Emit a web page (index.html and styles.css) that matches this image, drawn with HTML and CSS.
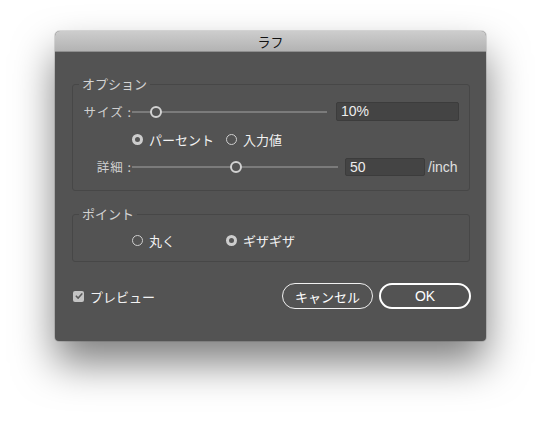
FILE: index.html
```html
<!DOCTYPE html>
<html lang="ja">
<head>
<meta charset="utf-8">
<title>ラフ</title>
<link rel="stylesheet" href="styles.css">
</head>
<body>
<div class="desktop">
  <div class="dialog">
    <div class="titlebar">ラフ</div>
    <div class="content">
      <fieldset class="group options">
        <legend>オプション</legend>
        <div class="row size-row">
          <span class="label">サイズ :</span>
          <div class="slider size-slider"><span class="thumb" style="left:18px"></span></div>
          <div class="field size-field">10%</div>
        </div>
        <div class="radio-row">
          <label class="radio-item"><span class="radio on"></span>パーセント</label>
          <label class="radio-item"><span class="radio"></span>入力値</label>
        </div>
        <div class="row detail-row">
          <span class="label">詳細 :</span>
          <div class="slider detail-slider"><span class="thumb" style="left:98px"></span></div>
          <div class="field detail-field">50</div>
          <span class="unit">/inch</span>
        </div>
      </fieldset>
      <fieldset class="group points">
        <legend>ポイント</legend>
        <div class="radio-row">
          <label class="radio-item"><span class="radio"></span>丸く</label>
          <label class="radio-item"><span class="radio on"></span>ギザギザ</label>
        </div>
      </fieldset>
      <div class="footer">
        <label class="check-item">
          <span class="checkbox"><svg viewBox="0 0 10 10" width="10" height="10"><path d="M2.3 5.2 L4.2 7.1 L7.8 2.9" fill="none" stroke="#5a5a5a" stroke-width="1.6" stroke-linecap="round" stroke-linejoin="round"/></svg></span>
          プレビュー
        </label>
        <div class="buttons">
          <button class="btn cancel">キャンセル</button>
          <button class="btn ok">OK</button>
        </div>
      </div>
    </div>
  </div>
</div>
</body>
</html>
```
FILE: styles.css
```css
html, body {
  margin: 0;
  padding: 0;
  background: #ffffff;
}
body {
  font-family: "Liberation Sans", "Noto Sans CJK JP", sans-serif;
  width: 542px;
  height: 421px;
  overflow: hidden;
}
.desktop {
  padding: 31px 0 0 55px;
}
.dialog {
  width: 431px;
  height: 310px;
  background: #535353;
  border-radius: 5px 5px 4px 4px;
  box-shadow: 0 22px 40px rgba(0,0,0,0.5), 0 0 0 1px rgba(0,0,0,0.12);
  overflow: hidden;
}
.titlebar {
  height: 21px;
  box-sizing: border-box;
  background: linear-gradient(#cdcdcd, #b3b3b3);
  border-bottom: 1px solid #8e8e8e;
  text-align: center;
  font-family: "Noto Sans CJK JP", sans-serif;
  font-size: 13px;
  line-height: 21px;
  color: #111;
}
.content {
  padding: 24px 16px 0 17px;
}
.group {
  margin: 0;
  border: 1px solid #474747;
  border-radius: 3px;
  min-width: 0;
}
.group legend {
  margin-left: 6px;
  padding: 0 3px;
  font-family: "Noto Sans CJK JP", sans-serif;
  font-size: 13px;
  line-height: 16px;
  color: #d4d4d4;
}
.options {
  padding: 10px 9px 14px 0;
}
.points {
  margin-top: 15px;
  padding: 9px 9px 14px 0;
}
.row {
  display: flex;
  align-items: center;
  height: 19px;
}
.label {
  width: 59px;
  flex: none;
  text-align: right;
  font-family: "Noto Sans CJK JP", sans-serif;
  font-size: 12.5px;
  letter-spacing: 1px;
  color: #d0d0d0;
  white-space: nowrap;
}
.slider {
  position: relative;
  height: 2px;
  background: #7b7b7b;
  flex: none;
}
.size-slider { width: 195px; margin-right: 9px; }
.detail-slider { width: 206px; margin-right: 7px; }
.thumb {
  position: absolute;
  top: -5px;
  width: 8px;
  height: 8px;
  border: 2px solid #d2d2d2;
  border-radius: 50%;
  background: #535353;
}
.field {
  box-sizing: border-box;
  height: 19px;
  background: #444444;
  border: 1px solid #3c3c3c;
  border-radius: 2px;
  color: #ededed;
  font-size: 14px;
  line-height: 17px;
  padding-left: 4px;
  flex: none;
}
.size-field { width: 123px; }
.detail-field { width: 80px; height: 18px; line-height: 16px; }
.unit {
  margin-left: 3px;
  font-size: 14px;
  color: #e0e0e0;
}
.detail-row { margin-top: 11px; }
.radio-row {
  display: grid;
  grid-template-columns: 94px auto;
  padding-left: 59px;
  height: 16px;
  margin-top: 9px;
  align-items: center;
}
.points .radio-row { margin-top: 0; }
.radio-item {
  display: flex;
  align-items: center;
  font-family: "Noto Sans CJK JP", sans-serif;
  font-size: 13px;
  color: #f2f2f2;
  white-space: nowrap;
}
.radio {
  box-sizing: border-box;
  width: 11px;
  height: 11px;
  border-radius: 50%;
  border: 1px solid #cfcfcf;
  margin-right: 6px;
  flex: none;
}
.radio.on {
  border: 3.5px solid #cdcdcd;
  background: #555555;
}
.footer {
  display: flex;
  align-items: center;
  justify-content: space-between;
  margin-top: 21px;
  padding-left: 1px;
  margin-right: -1px;
}
.check-item {
  display: flex;
  align-items: center;
  font-family: "Noto Sans CJK JP", sans-serif;
  font-size: 13px;
  color: #f2f2f2;
}
.checkbox {
  width: 11px;
  height: 11px;
  border-radius: 2px;
  background: #c4c4c4;
  margin-right: 6px;
  display: flex;
  align-items: center;
  justify-content: center;
}
.buttons {
  display: flex;
  gap: 6px;
}
.btn {
  box-sizing: border-box;
  height: 26px;
  border-radius: 13px;
  background: transparent;
  color: #ffffff;
  font-family: "Liberation Sans", "Noto Sans CJK JP", sans-serif;
  font-size: 13px;
  padding: 0;
  cursor: default;
}
.cancel {
  width: 91px;
  border: 1.5px solid #f0f0f0;
}
.ok {
  width: 92px;
  border: 2px solid #ffffff;
  font-size: 14px;
}
```
